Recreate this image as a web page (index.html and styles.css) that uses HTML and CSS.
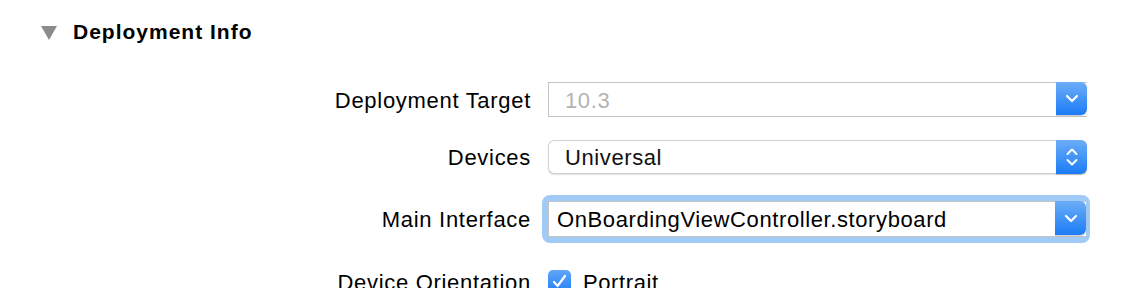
FILE: index.html
```html
<html>
<head>
	<title>Deployment Info</title>
	<link rel="stylesheet" href="styles.css">
</head>
<body>

<div class="section">
	<div class="header">
		<span class="disclosure"></span>
		<b class="title">Deployment Info</b>
	</div>

	<div class="form">
		<div class="label row1">Deployment Target</div>
		<div class="combo row1">
			<div class="field disabled">10.3</div>
			<div class="btn">
				<svg width="14" height="9" viewBox="0 0 14 9"><path d="M2 2 L7 7 L12 2" fill="none" stroke="#fff" stroke-width="2.2" stroke-linecap="round" stroke-linejoin="round"/></svg>
			</div>
		</div>

		<div class="label row2">Devices</div>
		<div class="popup row2">
			<div class="field">Universal</div>
			<div class="btn">
				<svg width="14" height="22" viewBox="0 0 14 22"><path d="M2.5 8 L7 3.5 L11.5 8 M2.5 14 L7 18.5 L11.5 14" fill="none" stroke="#fff" stroke-width="2" stroke-linecap="round" stroke-linejoin="round"/></svg>
			</div>
		</div>

		<div class="label row3">Main Interface</div>
		<div class="focus row3">
			<div class="combo main">
				<div class="field">OnBoardingViewController.storyboard</div>
				<div class="btn">
					<svg width="14" height="9" viewBox="0 0 14 9"><path d="M2 2 L7 7 L12 2" fill="none" stroke="#fff" stroke-width="2.2" stroke-linecap="round" stroke-linejoin="round"/></svg>
				</div>
			</div>
		</div>

		<div class="label top row4">Device Orientation</div>
		<div class="check row4">
			<span class="box">
				<svg width="23" height="23" viewBox="0 0 23 23"><path d="M6 12 L9.5 16 L17 6" fill="none" stroke="#fff" stroke-width="2.2" stroke-linecap="round" stroke-linejoin="round"/></svg>
			</span>
			<span>Portrait</span>
		</div>
	</div>
</div>

</body>
</html>
```

FILE: styles.css
```css
body {
	margin: 0;
	background: #fff;
	font-family: "Liberation Sans", Arial, sans-serif;
	color: #111;
	overflow: hidden;
}

.header {
	display: flex;
	align-items: center;
	height: 28px;
	padding: 18px 0 0 41px;
}

.disclosure {
	width: 0;
	height: 0;
	border-left: 8px solid transparent;
	border-right: 8px solid transparent;
	border-top: 14px solid #8c8c8c;
	margin-right: 16px;
	margin-top: 1px;
}

.title {
	font-size: 21px;
	letter-spacing: 1px;
	color: #000;
}

.form {
	display: grid;
	grid-template-columns: 531px 539px;
	column-gap: 17px;
	margin-top: 36px;
}

.label {
	box-sizing: border-box;
	font-size: 22px;
	letter-spacing: 0.7px;
	text-align: right;
	display: flex;
	align-items: center;
	justify-content: flex-end;
	padding-top: 2px;
	color: #000;
}

.label.top {
	align-items: flex-start;
	padding-top: 0;
}

.row1 { height: 35px; }
.row2 { height: 34px; margin-top: 23px; }
.row3 { height: 36px; margin-top: 27px; }
.row4 { height: 30px; margin-top: 27px; }

.field {
	flex: 1;
	font-size: 22px;
	letter-spacing: 0.6px;
	padding: 2px 0 0 16px;
	display: flex;
	align-items: center;
}

.field.disabled {
	color: #b3b3b3;
}

.btn {
	width: 31px;
	display: flex;
	align-items: center;
	justify-content: center;
	background: linear-gradient(#6cadf8, #1b7cf6);
	border-radius: 0 6px 6px 0;
	box-shadow: 0 1px 1px rgba(0, 0, 0, 0.2);
}

.combo {
	display: flex;
	box-sizing: border-box;
	border: 1px solid #c4c4c4;
	border-right: none;
	background: #fff;
}

.combo .btn {
	margin: -1px 0 1px 0;
}

.popup {
	display: flex;
	box-sizing: border-box;
	border: 1px solid #d2d2d2;
	border-right: none;
	border-radius: 6px;
	background: #fff;
	box-shadow: 0 1px 1px rgba(0, 0, 0, 0.12);
}

.popup .btn {
	margin: -1px 0;
}

.focus {
	margin-left: -6px;
	margin-right: -3px;
	margin-top: 21px;
	padding: 6px 4px 6px 6px;
	height: auto;
	background: #a2caf7;
	border-radius: 8px;
}

.main {
	height: 36px;
}

.main .field {
	padding-left: 8px;
	color: #000;
}

.check {
	display: flex;
	align-items: flex-start;
	font-size: 22px;
	letter-spacing: 0.6px;
	color: #000;
}

.check .box {
	width: 23px;
	height: 23px;
	border-radius: 5px;
	background: linear-gradient(#5fa6f8, #237ff6);
	margin-right: 12px;
	display: flex;
}
```
